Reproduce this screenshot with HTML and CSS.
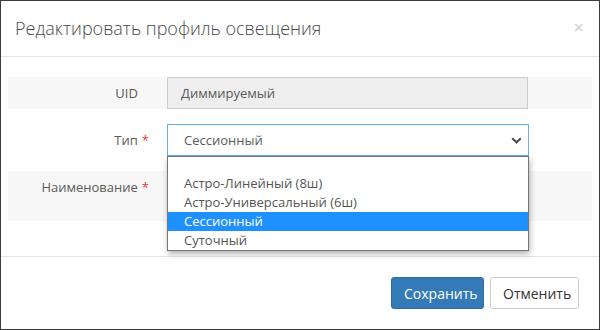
FILE: index.html
```html
<!DOCTYPE html>
<html lang="ru">
<head>
    <meta charset="UTF-8">
    <title>Редактировать профиль освещения</title>
    <link rel="stylesheet" href="styles.css">
</head>
<body>
    <div class="modal">
        <!-- Header -->
        <div class="modal-header">
            <h4 class="modal-title">Редактировать профиль освещения</h4>
            <span class="close">&times;</span>
        </div>

        <!-- Form -->
        <div class="modal-body">
            <div class="form-row shaded">
                <label class="form-label">UID<span class="req hidden">*</span></label>
                <div class="form-control readonly">Диммируемый</div>
            </div>

            <div class="form-row">
                <label class="form-label">Тип<span class="req">*</span></label>
                <div class="select-wrap">
                    <div class="form-control select-box">
                        <span>Сессионный</span>
                        <svg class="chevron" width="11" height="7" viewBox="0 0 11 7">
                            <polyline points="1.2,1.2 5.5,5.3 9.8,1.2" fill="none" stroke="#4a4a4a" stroke-width="2"/>
                        </svg>
                    </div>
                    <ul class="dropdown">
                        <li class="empty"></li>
                        <li>Астро-Линейный (8ш)</li>
                        <li>Астро-Универсальный (6ш)</li>
                        <li class="active">Сессионный</li>
                        <li>Суточный</li>
                    </ul>
                </div>
            </div>

            <div class="form-row shaded tall">
                <label class="form-label">Наименование<span class="req">*</span></label>
                <div class="form-control"></div>
            </div>
        </div>

        <!-- Footer -->
        <div class="modal-footer">
            <button class="btn btn-primary">Сохранить</button>
            <button class="btn btn-default">Отменить</button>
        </div>
    </div>
</body>
</html>
```

FILE: styles.css
```css
* {
    margin: 0;
    padding: 0;
    box-sizing: border-box;
}

body {
    background-color: #444;
    font-family: 'Open Sans', 'DejaVu Sans', sans-serif;
    font-size: 13px;
    color: #555;
}

.modal {
    width: 600px;
    height: 330px;
    background-color: #fff;
    border: 1px solid #3c3c3c;
}

.modal-header {
    display: flex;
    justify-content: space-between;
    align-items: flex-start;
    padding: 15px 14px 15px 14px;
    border-bottom: 1px solid #e5e5e5;
    height: 56px;
}

.modal-title {
    font-size: 18px;
    font-weight: 300;
    line-height: 25px;
    color: #4a4a4a;
}

.close {
    font-size: 19px;
    line-height: 22px;
    color: #cfcfcf;
    font-weight: 400;
    margin-right: 1px;
}

.modal-body {
    padding: 20px 7px 35px 7px;
}

.form-row {
    display: grid;
    grid-template-columns: 159px 361px;
    align-items: start;
    height: 32px;
    margin-bottom: 15px;
}

.form-row.tall {
    height: 50px;
    margin-bottom: 0;
}

.shaded {
    background-color: #f7f7f7;
}

.form-label {
    text-align: right;
    padding-right: 18px;
    line-height: 32px;
    color: #5a5a5a;
}

.req {
    color: #e43a3a;
    margin-left: 4px;
}

.req.hidden {
    visibility: hidden;
}

.form-control {
    height: 32px;
    border: 1px solid #ccc;
    background-color: #fff;
    padding-left: 13px;
    line-height: 30px;
    color: #5a5a5a;
}

.form-control.readonly {
    background-color: #eee;
}

.select-wrap {
    position: relative;
    width: 362px;
}

.select-box {
    display: flex;
    justify-content: space-between;
    align-items: center;
    border-color: #66afe9;
    padding-left: 16px;
    padding-right: 6px;
}

.dropdown {
    position: absolute;
    top: 100%;
    left: 0;
    right: 0;
    list-style: none;
    background-color: #fff;
    border: 1px solid #767676;
    box-shadow: 1px 3px 6px rgba(0, 0, 0, 0.3);
    z-index: 10;
}

.dropdown li {
    height: 19px;
    line-height: 19px;
    padding-left: 16px;
    color: #555;
}

.dropdown li.empty {
    height: 17px;
}

.dropdown li.active {
    background-color: #1e90ff;
    color: #fff;
}

.modal-footer {
    display: flex;
    justify-content: flex-end;
    gap: 6px;
    padding: 20px 20px;
    border-top: 1px solid #e5e5e5;
}

.btn {
    height: 32px;
    padding: 0 12px;
    font-family: inherit;
    font-size: 14px;
    border-radius: 3px;
    border: 1px solid transparent;
}

.btn-primary {
    width: 93px;
    background-color: #337ab7;
    border-color: #2e6da4;
    color: #fff;
}

.btn-default {
    width: 89px;
    background-color: #fff;
    border-color: #ccc;
    color: #333;
}
```
